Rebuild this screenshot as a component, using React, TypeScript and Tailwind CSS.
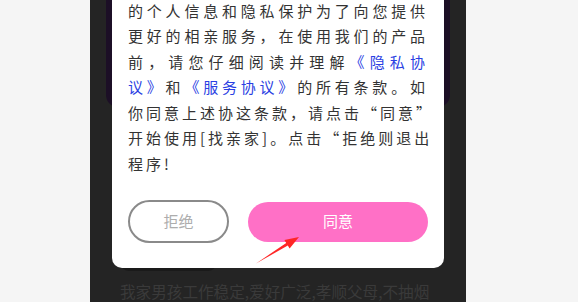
import React from "react";

const cjk = { fontFamily: '"Noto Sans CJK SC", "Noto Sans", sans-serif' };

function Line({ children, last = false }: { children: React.ReactNode; last?: boolean }) {
  return (
    <div
      className={
        last
          ? "whitespace-nowrap text-left"
          : "whitespace-nowrap text-justify [text-align-last:justify]"
      }
    >
      {children}
    </div>
  );
}

const Link = ({ children }: { children: React.ReactNode }) => (
  <span className="text-[#2b3fe3]">{children}</span>
);

export default function App() {
  return (
    <div className="w-[578px] h-[302px] overflow-hidden bg-[#f5f5f5] pl-[90px]" style={cjk}>
      <div className="relative w-[376px] h-[302px] bg-[#242424] flex flex-col">
        <div className="mx-4 h-[108px] bg-[#1c0f26] rounded-b-xl" />
        <div className="mt-[146px] ml-[30px] w-[97px] h-[18px] rounded-full bg-[#1a1a1a]" />
        <div className="mt-[9px] ml-[30px] text-[15.6px] leading-[22px] text-[#3a3a3a] whitespace-nowrap">
          我家男孩工作稳定,爱好广泛,孝顺父母,不抽烟
        </div>

        <div className="absolute left-[22px] right-[22px] bottom-[34px] bg-white rounded-b-[10px] px-4 pt-[20px] pb-[25px]">
          <div className="text-[15px] leading-[25.5px] text-[#333] tracking-[3px]">
            <Line>的个人信息和隐私保护为了向您提供</Line>
            <Line>更好的相亲服务，在使用我们的产品</Line>
            <Line>
              前，请您仔细阅读并理解<Link>《隐私协</Link>
            </Line>
            <Line>
              <Link>议》</Link>和<Link>《服务协议》</Link>的所有条款。如
            </Line>
            <Line>你同意上述协这条款，请点击“同意”</Line>
            <Line>开始使用[找亲家]。点击“拒绝则退出</Line>
            <Line last>程序!</Line>
          </div>
          <div className="mt-[24px] flex items-center">
            <div className="w-[101px] h-[43px] rounded-full border-2 border-[#8a8a8a] flex items-center justify-center text-[15px] text-[#adadad]">
              拒绝
            </div>
            <div className="ml-[19px] flex-1 h-[40px] rounded-full bg-[#ff70c6] flex items-center justify-center text-[15px] text-white">
              同意
            </div>
          </div>
        </div>

        <svg
          className="absolute left-0 top-0 pointer-events-none"
          width="376"
          height="302"
          viewBox="90 0 376 302"
        >
          <polygon
            points="256,263.5 286.2,243 284.4,240 299,237 289.6,248.6 287.8,245.6"
            fill="#ff2626"
          />
        </svg>
      </div>
    </div>
  );
}
